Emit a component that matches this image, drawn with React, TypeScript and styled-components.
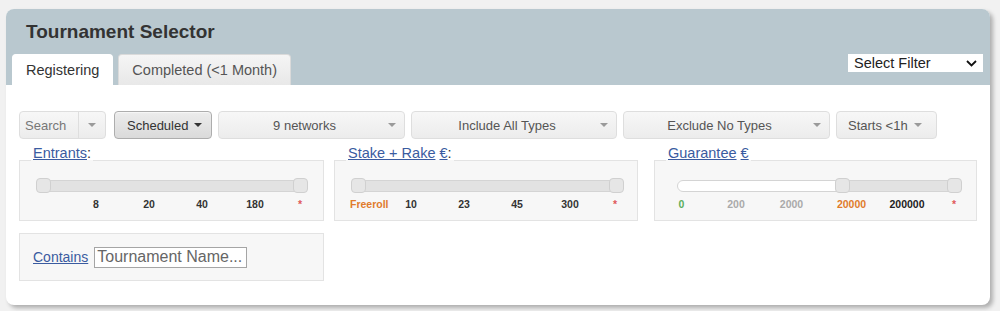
import styled, { createGlobalStyle } from 'styled-components'

const GlobalStyle = createGlobalStyle`
  html, body {
    margin: 0;
    padding: 0;
    background: #f1f1f1;
  }
  body {
    font-family: "Liberation Sans", Arial, sans-serif;
  }
`

const Page = styled.div`
  padding: 9px 0 0 6px;
  height: 311px;
  box-sizing: border-box;
`

const Panel = styled.div`
  width: 984px;
  border-radius: 8px;
  background: #fff;
  box-shadow: 3px 3px 4px rgba(0, 0, 0, 0.28);
  overflow: hidden;
`

const Header = styled.div`
  background: #b9c8cf;
  padding: 12px 7px 0 6px;
`

const Title = styled.h1`
  margin: 0 0 0 14px;
  font-size: 19px;
  line-height: 22px;
  font-weight: bold;
  color: #333;
`

const TabBar = styled.div`
  display: flex;
  align-items: flex-start;
  margin-top: 11px;
`

const Tabs = styled.div`
  display: flex;
  gap: 5px;
`

const Tab = styled.div<{ $active?: boolean }>`
  height: 31px;
  box-sizing: border-box;
  padding: 0 13px;
  display: flex;
  align-items: center;
  font-size: 14.5px;
  color: ${(p) => (p.$active ? '#333' : '#555')};
  background: ${(p) => (p.$active ? '#fff' : 'linear-gradient(#f5f5f5, #e8e8e8)')};
  border: 1px solid ${(p) => (p.$active ? '#fff' : '#dadada')};
  border-bottom: none;
  border-radius: 4px 4px 0 0;
`

const FilterSelect = styled.div`
  margin-left: auto;
  width: 135px;
  height: 18px;
  box-sizing: border-box;
  padding: 0 6px;
  background: #fff;
  display: flex;
  align-items: center;
  justify-content: space-between;
  font-size: 14.5px;
  color: #222;
`

const Body = styled.div`
  padding: 26px 13px 24px;
`

const FilterRow = styled.div`
  display: flex;
  gap: 6px;
`

const Button = styled.div<{ $width?: number; $pressed?: boolean }>`
  width: ${(p) => (p.$width ? `${p.$width}px` : 'auto')};
  height: 28px;
  box-sizing: border-box;
  padding: 0 8px;
  display: flex;
  align-items: center;
  gap: 6px;
  border-radius: 4px;
  font-size: 13px;
  color: ${(p) => (p.$pressed ? '#333' : '#555')};
  border: 1px solid ${(p) => (p.$pressed ? '#adadad' : '#dedede')};
  background: ${(p) => (p.$pressed ? 'linear-gradient(#ececec, #dadada)' : 'linear-gradient(#f7f7f7, #ececec)')};
  box-shadow: ${(p) => (p.$pressed ? 'inset 0 1px 1px rgba(255,255,255,0.6)' : 'none')};
`

const SplitButton = styled.div`
  display: flex;
  height: 28px;
  margin-right: 2px;
  box-sizing: border-box;
  border: 1px solid #dedede;
  border-radius: 4px;
  background: linear-gradient(#f7f7f7, #ececec);
  font-size: 13px;
  color: #777;
`

const SplitLabel = styled.div`
  width: 59px;
  padding-left: 5px;
  box-sizing: border-box;
  display: flex;
  align-items: center;
  border-right: 1px solid #dedede;
`

const SplitToggle = styled.div`
  width: 26px;
  display: flex;
  align-items: center;
  justify-content: center;
`

const ButtonLabel = styled.span<{ $fill?: boolean }>`
  flex: ${(p) => (p.$fill ? 1 : 'none')};
  text-align: center;
  white-space: nowrap;
`

const Caret = styled.span<{ $dark?: boolean }>`
  width: 0;
  height: 0;
  border-left: 4px solid transparent;
  border-right: 4px solid transparent;
  border-top: 4px solid ${(p) => (p.$dark ? '#333' : '#9a9a9a')};
`

const RangeRow = styled.div`
  display: flex;
  margin-top: 6px;
`

const Group = styled.fieldset<{ $width: number; $gap?: number }>`
  width: ${(p) => p.$width}px;
  margin: 0 ${(p) => p.$gap ?? 0}px 0 0;
  min-width: 0;
  box-sizing: border-box;
  padding: 5px 0 10px;
  border: 1px solid #e3e3e3;
  background: #f7f7f7;
`

const Legend = styled.legend`
  margin-left: 11px;
  padding: 0 2px 13px;
  font-size: 14.5px;
  line-height: 17px;
  color: #333;
`

const Link = styled.a`
  color: #3a5ba0;
  text-decoration: underline;
  cursor: pointer;
`

const Track = styled.div<{ $left: number; $right: number }>`
  position: relative;
  height: 12px;
  margin: 0 ${(p) => p.$right}px 0 ${(p) => p.$left}px;
  box-sizing: border-box;
  border: 1px solid #d4d4d4;
  border-radius: 6px;
  background: #fff;
`

const Range = styled.div`
  position: absolute;
  top: 0;
  bottom: 0;
  right: 0;
  background: #e2e2e2;
  border-radius: 0 5px 5px 0;
`

const Handle = styled.div`
  position: absolute;
  top: -3.5px;
  width: 15px;
  height: 15px;
  box-sizing: border-box;
  border: 1px solid #d0d0d0;
  border-radius: 4px;
  background: #e6e6e6;
`

const TickRow = styled.div<{ $cols: string }>`
  display: grid;
  grid-template-columns: ${(p) => p.$cols};
  margin-top: 6px;
  font-size: 10.5px;
  line-height: 12px;
  font-weight: bold;
`

const Tick = styled.span<{ $color: string; $start?: boolean }>`
  color: ${(p) => p.$color};
  text-align: ${(p) => (p.$start ? 'left' : 'center')};
  padding-left: ${(p) => (p.$start ? '15px' : '0')};
  white-space: nowrap;
`

const ContainsBox = styled.div`
  width: 305px;
  height: 48px;
  margin-top: 12px;
  box-sizing: border-box;
  padding-left: 13px;
  display: flex;
  align-items: center;
  gap: 6px;
  border: 1px solid #e3e3e3;
  background: #f7f7f7;
  font-size: 14px;
`

const NameInput = styled.input`
  width: 153px;
  height: 21px;
  box-sizing: border-box;
  padding: 0 2px;
  border: 1px solid #a5a5a5;
  font-family: "Liberation Sans", Arial, sans-serif;
  font-size: 16px;
  background: #fff;
  outline: none;

  &::placeholder {
    color: #666;
  }
`

const ENTRANT_COLS = '49.5px repeat(4, 53px) 37px'

type TickData = { label: string; color: string; start?: boolean }

type Slider = {
  key: string
  width: number
  gap: number
  legend: React.ReactNode
  left: number
  right: number
  low: number
  cols: string
  ticks: TickData[]
}

const RED = '#e05a5a'

const SLIDERS: Slider[] = [
  {
    key: 'entrants',
    width: 305,
    gap: 10,
    legend: (
      <>
        <Link>Entrants</Link>:
      </>
    ),
    left: 16,
    right: 15,
    low: 0,
    cols: ENTRANT_COLS,
    ticks: [
      { label: '', color: '#333' },
      { label: '8', color: '#333' },
      { label: '20', color: '#333' },
      { label: '40', color: '#333' },
      { label: '180', color: '#333' },
      { label: '*', color: RED },
    ],
  },
  {
    key: 'stake',
    width: 304,
    gap: 16,
    legend: (
      <>
        <Link>Stake + Rake</Link> <Link>€</Link>:
      </>
    ),
    left: 16,
    right: 13,
    low: 0,
    cols: ENTRANT_COLS,
    ticks: [
      { label: 'Freeroll', color: '#e07b2c', start: true },
      { label: '10', color: '#333' },
      { label: '23', color: '#333' },
      { label: '45', color: '#333' },
      { label: '300', color: '#333' },
      { label: '*', color: RED },
    ],
  },
  {
    key: 'guarantee',
    width: 323,
    gap: 0,
    legend: (
      <>
        <Link>Guarantee</Link> <Link>€</Link>
      </>
    ),
    left: 22,
    right: 14,
    low: 0.589,
    cols: '53px 56px 55px 65px 46px 48px',
    ticks: [
      { label: '0', color: '#5cae5c' },
      { label: '200', color: '#aaa' },
      { label: '2000', color: '#aaa' },
      { label: '20000', color: '#e07b2c' },
      { label: '200000', color: '#222' },
      { label: '*', color: RED },
    ],
  },
]

function Chevron() {
  return (
    <svg width="11" height="7" viewBox="0 0 11 7">
      <path d="M1 1l4.5 4.5L10 1" fill="none" stroke="#111" strokeWidth="1.8" />
    </svg>
  )
}

export default function App() {
  return (
    <Page>
      <GlobalStyle />
      <Panel>
        <Header>
          <Title>Tournament Selector</Title>
          <TabBar>
            <Tabs>
              <Tab $active>Registering</Tab>
              <Tab>Completed (&lt;1 Month)</Tab>
            </Tabs>
            <FilterSelect>
              <span>Select Filter</span>
              <Chevron />
            </FilterSelect>
          </TabBar>
        </Header>

        <Body>
          <FilterRow>
            <SplitButton>
              <SplitLabel>Search</SplitLabel>
              <SplitToggle>
                <Caret />
              </SplitToggle>
            </SplitButton>
            <Button $width={98} $pressed style={{ padding: '0 11px 0 12px' }}>
              <ButtonLabel>Scheduled</ButtonLabel>
              <Caret $dark />
            </Button>
            <Button $width={187}>
              <ButtonLabel $fill>9 networks</ButtonLabel>
              <Caret />
            </Button>
            <Button $width={206}>
              <ButtonLabel $fill>Include All Types</ButtonLabel>
              <Caret />
            </Button>
            <Button $width={207}>
              <ButtonLabel $fill>Exclude No Types</ButtonLabel>
              <Caret />
            </Button>
            <Button $width={101} style={{ padding: '0 11px' }}>
              <ButtonLabel>Starts &lt;1h</ButtonLabel>
              <Caret />
            </Button>
          </FilterRow>

          <RangeRow>
            {SLIDERS.map((s) => (
              <Group key={s.key} $width={s.width} $gap={s.gap}>
                <Legend>{s.legend}</Legend>
                <Track $left={s.left} $right={s.right}>
                  <Range
                    style={{
                      left: `calc((100% - 15px) * ${s.low} + 7px)`,
                      borderRadius: s.low === 0 ? '5px' : '0 5px 5px 0',
                    }}
                  />
                  <Handle style={{ left: `calc((100% - 15px) * ${s.low} - 1px)` }} />
                  <Handle style={{ left: 'calc(100% - 14px)' }} />
                </Track>
                <TickRow $cols={s.cols}>
                  {s.ticks.map((t, i) => (
                    <Tick key={i} $color={t.color} $start={t.start}>
                      {t.label}
                    </Tick>
                  ))}
                </TickRow>
              </Group>
            ))}
          </RangeRow>

          <ContainsBox>
            <Link>Contains</Link>
            <NameInput placeholder="Tournament Name..." />
          </ContainsBox>
        </Body>
      </Panel>
    </Page>
  )
}
